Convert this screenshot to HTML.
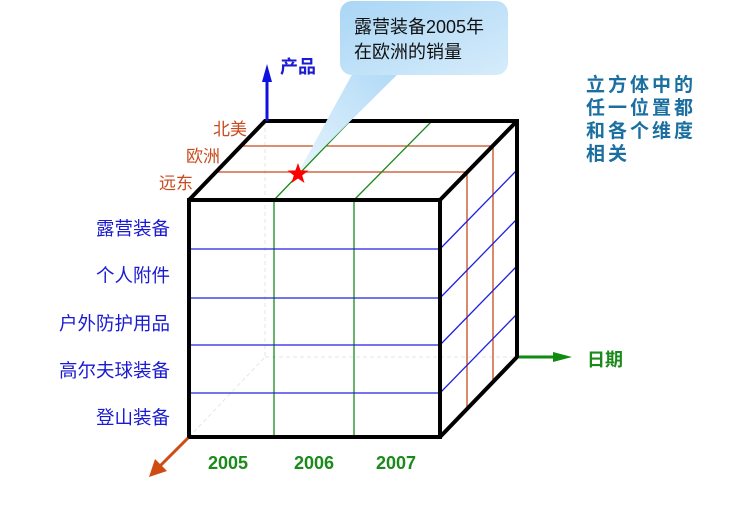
<!DOCTYPE html>
<html><head><meta charset="utf-8"><style>
body{margin:0;background:#fff;width:745px;height:506px;overflow:hidden}
svg text{font-family:"Liberation Sans","Noto Sans CJK SC",sans-serif}
</style></head><body>
<svg width="745" height="506" viewBox="0 0 745 506" xmlns="http://www.w3.org/2000/svg">
<defs>
<linearGradient id="cg" x1="0" y1="0" x2="1" y2="1">
<stop offset="0" stop-color="#a9d6f5"/><stop offset="1" stop-color="#d6ecfb"/></linearGradient>
<linearGradient id="pg" x1="1" y1="0" x2="0" y2="1">
<stop offset="0" stop-color="#a9d6f5"/><stop offset="1" stop-color="#e6f4fd"/></linearGradient>
</defs>
<g stroke="#e6e6e6" stroke-width="1" stroke-dasharray="4,3">
<line x1="189" y1="437" x2="265" y2="357"/>
<line x1="265" y1="357" x2="517" y2="357"/>
<line x1="265" y1="121" x2="265" y2="357"/>
</g>
<g stroke="#c84a1e" stroke-width="1.3">
<line x1="242" y1="146" x2="493" y2="146"/>
<line x1="218" y1="172" x2="467" y2="172"/>
<line x1="493" y1="146" x2="493" y2="382"/>
<line x1="467" y1="172" x2="467" y2="408"/>
</g>
<g stroke="#1a8a1a" stroke-width="1.3">
<line x1="274" y1="200" x2="350" y2="121"/>
<line x1="354" y1="200" x2="432" y2="121"/>
<line x1="274" y1="200" x2="274" y2="437"/>
<line x1="354" y1="200" x2="354" y2="437"/>
</g>
<g stroke="#2020e0" stroke-width="1.3">
<line x1="189" y1="249" x2="440" y2="249"/>
<line x1="189" y1="298" x2="440" y2="298"/>
<line x1="189" y1="345" x2="440" y2="345"/>
<line x1="189" y1="393" x2="440" y2="393"/>
<line x1="440" y1="249" x2="517" y2="170"/>
<line x1="440" y1="298" x2="517" y2="219"/>
<line x1="440" y1="345" x2="517" y2="266"/>
<line x1="440" y1="393" x2="517" y2="314"/>
</g>
<g stroke="#000" stroke-width="4" fill="none" stroke-linejoin="miter">
<rect x="189" y="200" width="251" height="237"/>
<polyline points="189,200 265,121 517,121 517,357 440,437"/>
<line x1="440" y1="200" x2="517" y2="121"/>
</g>
<line x1="267" y1="121" x2="267" y2="80" stroke="#1010e0" stroke-width="3"/>
<polygon points="267,64 262,82 272,82" fill="#1010e0"/>
<line x1="519" y1="357" x2="556" y2="357" stroke="#108a10" stroke-width="3"/>
<polygon points="572,357 553,352 553,362" fill="#108a10"/>
<line x1="188" y1="438" x2="160" y2="466" stroke="#d04a14" stroke-width="3"/>
<polygon points="149,477 155,459 167,471" fill="#d04a14"/>
<polygon points="298,173 360,60 412,60" fill="url(#pg)"/>
<rect x="340" y="1" width="168" height="74" rx="12" fill="url(#cg)"/>
<text x="354" y="33" font-size="18" fill="#111">露营装备2005年</text>
<text x="354" y="58" font-size="18" fill="#111">在欧洲的销量</text>
<polygon fill="#f00" points="298,163 300.6,170.4 308.5,170.6 302.2,175.4 304.5,183 298,178.5 291.5,183 293.8,175.4 287.5,170.6 295.4,170.4"/>
<text x="280" y="73" font-size="18" font-weight="bold" fill="#1a1ad0">产品</text>
<g font-size="17" fill="#c84a1e">
<text x="213" y="135">北美</text>
<text x="186" y="162">欧洲</text>
<text x="159" y="189">远东</text>
</g>
<g font-size="18.5" fill="#1a1ad0" text-anchor="end">
<text x="170" y="235">露营装备</text>
<text x="170" y="282">个人附件</text>
<text x="170" y="330">户外防护用品</text>
<text x="170" y="377">高尔夫球装备</text>
<text x="170" y="424">登山装备</text>
</g>
<g font-size="18" font-weight="bold" fill="#1a8a1a">
<text x="208" y="469">2005</text>
<text x="294" y="469">2006</text>
<text x="376" y="469">2007</text>
<text x="587" y="366">日期</text>
</g>
<g font-size="19" font-weight="bold" fill="#1a6fa0" letter-spacing="3">
<text x="586" y="91">立方体中的</text>
<text x="586" y="114">任一位置都</text>
<text x="586" y="137">和各个维度</text>
<text x="586" y="160">相关</text>
</g>
</svg>
</body></html>
